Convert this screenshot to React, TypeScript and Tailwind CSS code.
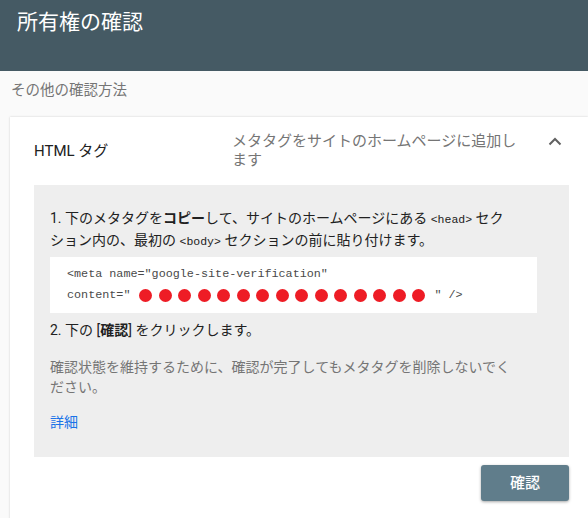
import React from 'react';

const sans = "font-['Roboto','Noto_Sans_CJK_JP',sans-serif]";
const mono = "font-['Liberation_Mono','Noto_Sans_CJK_JP',monospace]";

const RedDots: React.FC<{ count: number }> = ({ count }) => (
  <span className="inline-flex items-center gap-[6.5px] align-middle">
    {Array.from({ length: count }).map((_, i) => (
      <span key={i} className="inline-block h-[13px] w-[13px] rounded-full bg-[#ee1c25]" />
    ))}
  </span>
);

const Tag: React.FC<{ children: React.ReactNode }> = ({ children }) => (
  <span className={`${mono} text-[11.5px] leading-none`}>{children}</span>
);

const App: React.FC = () => {
  return (
    <div className={`${sans} h-[518px] w-[588px] overflow-hidden bg-[#fafafa]`}>
      <div className="h-[71px] bg-[#455a64] pl-[17px] pt-[7px]">
        <h1 className="text-[21px] leading-[30px] text-white">所有権の確認</h1>
      </div>

      <p className="pl-[11px] pt-[10px] text-[14.5px] leading-[20px] text-[#757575]">その他の確認方法</p>

      <div className="ml-[10px] mt-[16px] bg-white pl-[24px] pr-[19px] shadow-[0_0_2px_rgba(0,0,0,0.18)]">
        <div className="flex h-[68px] items-center">
          <div className="w-[198px] text-[15px] text-[#212121]">HTML タグ</div>
          <div className="w-[290px] text-[15px] leading-[19px] text-[#757575]">
            メタタグをサイトのホームページに追加します
          </div>
          <svg className="mb-[20px] ml-[26px]" width="14" height="9" viewBox="0 0 14 9">
            <path d="M1.5 7.5 L7 2 L12.5 7.5" fill="none" stroke="#616161" strokeWidth="2" />
          </svg>
        </div>

        <div className="bg-[#eeeeee] pb-[25px] pl-[16px] pr-[32px] pt-[22px]">
          <p className="whitespace-nowrap text-[14px] leading-[22px] text-[#212121]">
            1. 下のメタタグを<b className="font-bold">コピー</b>して、サイトのホームページにある <Tag>&lt;head&gt;</Tag> セク
            <br />
            ション内の、最初の <Tag>&lt;body&gt;</Tag> セクションの前に貼り付けます。
          </p>
          <div className={`${mono} mt-[6px] bg-white py-[7px] pl-[17px] text-[11.75px] leading-[21px] text-[#4a4a4a]`}>
            <div>&lt;meta name="google-site-verification"</div>
            <div className="flex items-center">
              <span>content="</span>
              <span className="ml-[9px] mr-[9px] flex">
                <RedDots count={15} />
              </span>
              <span>" /&gt;</span>
            </div>
          </div>
          <p className="mt-[6px] text-[14px] leading-[22px] text-[#212121]">
            2. 下の [<b className="font-bold">確認</b>] をクリックします。
          </p>
          <p className="mt-[16px] whitespace-nowrap text-[14px] leading-[20px] text-[#757575]">
            確認状態を維持するために、確認が完了してもメタタグを削除しないでく
            <br />
            ださい。
          </p>
          <a className="mt-[15px] block text-[14px] leading-[20px] text-[#1a73e8]" href="#">
            詳細
          </a>
        </div>

        <div className="flex justify-end pb-[20px] pt-[8px]">
          <button className="h-[36px] w-[88px] rounded-[3px] bg-[#607d8b] text-[15px] font-medium text-white shadow-[0_1px_3px_rgba(0,0,0,0.35)]">
            確認
          </button>
        </div>
      </div>
    </div>
  );
};

export default App;
